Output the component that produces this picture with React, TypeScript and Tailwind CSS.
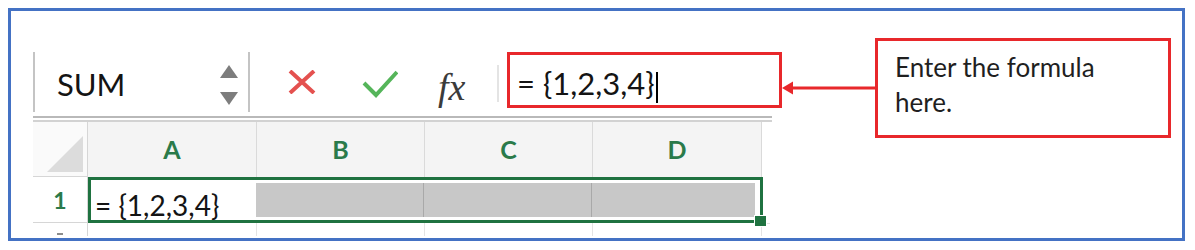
const font = { fontFamily: "Lato, 'Open Sans', sans-serif" };

const columns = [
  { label: "A", width: "w-[169px]" },
  { label: "B", width: "w-[168px]" },
  { label: "C", width: "w-[168px]" },
  { label: "D", width: "w-[169px]" },
];

function Spinner() {
  return (
    <svg width="18" height="40" viewBox="0 0 18 40" className="mt-[13px] ml-auto mr-[10px]">
      <polygon points="9,0 18,13 0,13" fill="#7d7d7d" />
      <polygon points="0,27 18,27 9,40" fill="#7d7d7d" />
    </svg>
  );
}

function CancelIcon() {
  return (
    <svg width="28" height="24" viewBox="0 0 28 24" className="ml-[38px] mt-[18px]">
      <path d="M2 1 L26 23 M26 1 L2 23" stroke="#e4514f" strokeWidth="4" />
    </svg>
  );
}

function EnterIcon() {
  return (
    <svg width="36" height="28" viewBox="0 0 36 28" className="ml-[46px] mt-[18px]">
      <path d="M2 13 L14 25 L35 2" stroke="#55b55a" strokeWidth="4" fill="none" />
    </svg>
  );
}

export default function App() {
  return (
    <div className="w-[1195px] h-[250px] bg-white pl-[8px] pt-[8px]" style={font}>
      <div className="relative w-[1177px] h-[233px] border-[3px] border-[#4472c4] pl-[22px] pt-[41px]">
        {/* Formula bar */}
        <div className="flex h-[64px] items-start">
          <div className="flex items-start w-[217px] h-[60px] border-l-2 border-r-2 border-[#c4c4c4] pl-[22px]">
            <span className="mt-[17px] text-[31px] leading-none text-[#141414]">SUM</span>
            <Spinner />
          </div>
          <CancelIcon />
          <EnterIcon />
          <div
            className="ml-[40px] mt-[16px] w-[44px] text-[38px] leading-none italic text-[#3b3b3b]"
            style={{ fontFamily: "'Liberation Serif', 'DejaVu Serif', serif" }}
          >
            fx
          </div>
          <div className="ml-[15px] mt-[13px] w-[2px] h-[37px] bg-[#e4e4e4]" />
          <div className="ml-[8px] flex w-[275px] h-[56px] border-[3px] border-[#e8282b] pl-[7px]">
            <span className="mt-[13px] text-[31px] leading-none text-[#141414]">= {"{1,2,3,4}"}</span>
            <span className="mt-[17px] ml-[1px] w-[2px] h-[31px] bg-black" />
          </div>
        </div>

        {/* Double divider */}
        <div className="w-[739px]">
          <div className="h-[2px] bg-[#b9b9b9]" />
          <div className="h-[2px]" />
          <div className="h-[2px] bg-[#d2d2d2]" />
        </div>

        {/* Grid */}
        <div className="w-[739px]">
          <div className="flex h-[55px]">
            <div className="w-[55px] bg-[#fafafa] border-r border-b border-[#d6d6d6] flex items-end justify-end pr-[4px] pb-[4px]">
              <svg width="36" height="36" viewBox="0 0 36 36">
                <polygon points="36,0 36,36 0,36" fill="#dcdcdc" />
              </svg>
            </div>
            {columns.map((c) => (
              <div
                key={c.label}
                className={`${c.width} bg-[#f4f4f4] border-r border-[#dadada] flex items-center justify-center text-[25px] font-bold text-[#2a7a4a]`}
              >
                {c.label}
              </div>
            ))}
          </div>

          <div className="flex h-[46px]">
            <div className="w-[55px] border-r border-b border-[#d6d6d6] flex items-center justify-center text-[23px] font-bold text-[#2a7a4a] pt-[2px]">
              1
            </div>
            <div className="relative flex w-[675px] h-[46px] border-[3px] border-[#1f7240]">
              <div className="w-[165px] bg-white pl-[4px] pt-[11px]">
                <span className="text-[28px] leading-none text-[#141414]">= {"{1,2,3,4}"}</span>
              </div>
              <div className="flex flex-1 py-[3px] pr-[5px]">
                <div className="w-[168px] bg-[#c8c8c8] border-r border-[#a9a9a9]" />
                <div className="w-[168px] bg-[#c8c8c8] border-r border-[#a9a9a9]" />
                <div className="flex-1 bg-[#c8c8c8]" />
              </div>
              <div className="absolute -right-[7px] -bottom-[7px] w-[13px] h-[12px] bg-[#1f7240] border border-white" />
            </div>
            <div className="w-[7px] h-[46px] border-b border-[#e2e2e2] mt-[1px]" />
          </div>

          <div className="flex h-[13px]">
            <div className="w-[55px] border-r border-[#d6d6d6] flex items-end justify-center">
              <div className="w-[6px] h-[2px] bg-[#8c8c8c] mb-[1px]" />
            </div>
            <div className="w-[169px] border-r border-[#e4e4e4]" />
            <div className="w-[168px] border-r border-[#e4e4e4]" />
            <div className="w-[168px] border-r border-[#e4e4e4]" />
            <div className="w-[169px] border-r border-[#e4e4e4]" />
          </div>
        </div>

        {/* Annotation */}
        <svg width="96" height="16" viewBox="0 0 96 16" className="absolute left-[771px] top-[69px]">
          <line x1="8" y1="8" x2="96" y2="8" stroke="#e8282b" strokeWidth="3" />
          <polygon points="0,8 11,1.5 11,14.5" fill="#e8282b" />
        </svg>
        <div className="absolute left-[864px] top-[27px] w-[296px] h-[100px] border-[3px] border-[#e8282b] pl-[17px] pt-[9px] text-[26px] leading-[35px] text-[#1f1f1f]">
          Enter the formula
          <br />
          here.
        </div>
      </div>
    </div>
  );
}
